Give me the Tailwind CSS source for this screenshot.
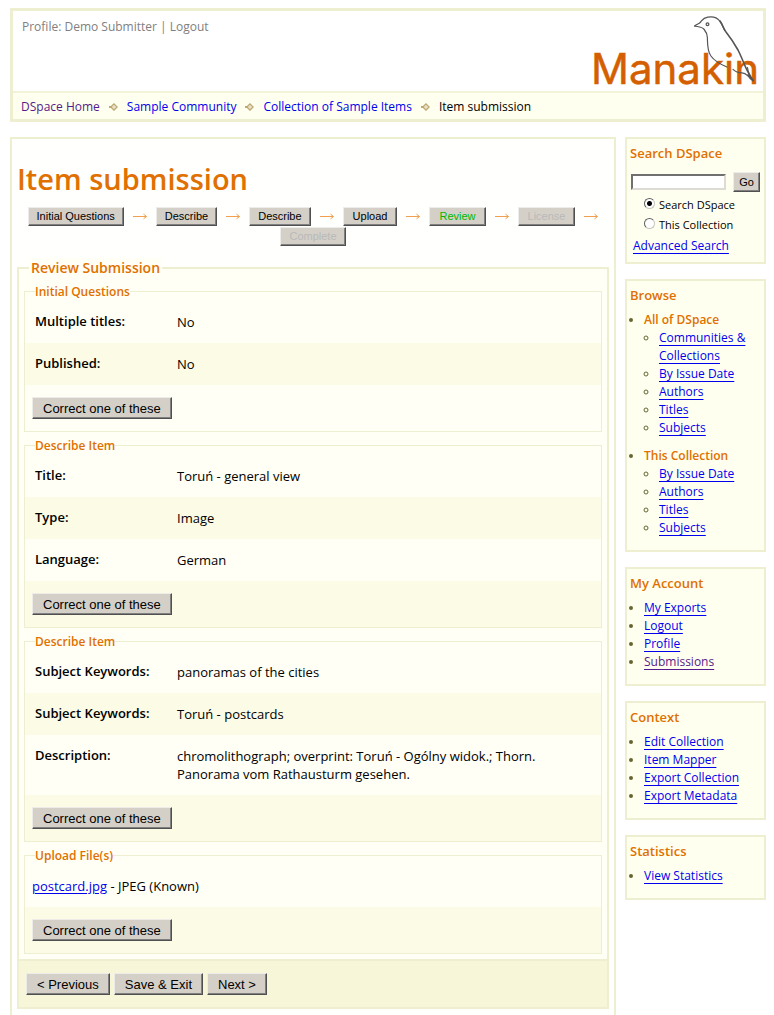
<!DOCTYPE html>
<html lang="en">
<head>
  <meta charset="UTF-8" />
  <meta name="viewport" content="width=device-width, initial-scale=1.0" />
  <title>Item submission</title>
  <script src="https://cdn.jsdelivr.net/npm/@tailwindcss/browser@4"></script>
</head>
<body class="bg-white font-['Open_Sans',sans-serif] text-[12px] leading-[18px] text-black pt-2 pl-[10px] pr-2">
  <svg class="hidden">
    <symbol id="crumb" viewBox="0 0 9 8">
      <path d="M0 4h3" stroke="#bda973" stroke-width="2" />
      <path d="M5 .8L8.2 4L5 7.2L2.5 4.7V3.3z" fill="#eadfc4" stroke="#bda973" stroke-width="1.2" />
    </symbol>
    <symbol id="arrow" viewBox="0 0 14 7">
      <path d="M0 3.5h13.5M10.5 1.2l3 2.3l-3 2.3" fill="none" stroke="#f0a050" stroke-width="1" />
    </symbol>
  </svg>

  <header class="border-3 border-[#eeefd0]">
    <div class="flex justify-between h-20 pl-[9px]">
      <p class="pt-[7px] text-[#808080]"><a href="#">Profile: Demo Submitter</a> | <a href="#">Logout</a></p>
      <svg class="w-[175px] h-20 overflow-visible" viewBox="0 0 175 80" role="img" aria-label="Manakin">
        <text x="3" y="73" font-family="Inter, sans-serif" font-size="42" fill="#d45f00" stroke="#d45f00" stroke-width=".5">Manakin</text>
        <g fill="none" stroke="#555" stroke-width="1.2" stroke-linecap="round">
          <path d="M106.700 15c2-2 4-2 5.500-3.500c2-2 2.500-4.500 7.500-5.300c4-.7 9-.2 12 3.800c2.500 3 3 6 5 9.500" />
          <path d="M132 10c3 4 3 7 6 11c4 5 8 11 12 18c3 6 5 11 7.500 17c2 5 5 9 7.500 13.700" stroke-width="1.600" />
          <path d="M106.700 15c3 .8 7 .4 9.500 3.500c2.500 3 3 4 3.200 8c.2 6-.4 13 3.500 18.500c4 5.500 10 8.500 16 11" />
          <path d="M145 58.300c3 3 6 3.500 9 3.500c5 0 4 2.500 11 7.900c-3-4-5-9-5.500-13M165 69.700c-2-1-4-3-5-6" />
          <circle cx="119.500" cy="13.300" r="1.400" />
        </g>
      </svg>
    </div>
    <nav class="flex items-center gap-[9px] h-7 border-t-2 border-[#f3f3d9] bg-[#ffffef] pl-2 pt-px text-[#0000ee]">
      <a href="#" class="text-[#551a8b]">DSpace Home</a>
      <svg class="w-[9px] h-2"><use href="#crumb" /></svg>
      <a href="#">Sample Community</a>
      <svg class="w-[9px] h-2"><use href="#crumb" /></svg>
      <a href="#">Collection of Sample Items</a>
      <svg class="w-[9px] h-2"><use href="#crumb" /></svg>
      <span class="text-black">Item submission</span>
    </nav>
  </header>

  <div class="flex items-start gap-[9px] mt-[15px]">
    <main class="flex-1 border-2 border-b-0 border-[#eeefd0] bg-[#fffffe] px-[5px] pt-5 pb-[6px]">
      <h1 class="text-[29px] leading-10 font-semibold text-[#e07000]">Item submission</h1>

      <ol class="flex flex-wrap justify-center gap-x-[9px] gap-y-px mt-2 font-['Liberation_Sans',sans-serif] text-[11px]">
        <li class="flex items-center gap-[9px]">
          <button class="h-[19px] px-2 leading-none border border-t-[#eeece8] border-l-[#eeece8] border-r-[#505050] border-b-[#505050] bg-[#d4d0c8] shadow-[inset_-1px_-1px_0_#808080]">Initial Questions</button>
          <svg class="w-[14px] h-[7px]"><use href="#arrow" /></svg>
        </li>
        <li class="flex items-center gap-[9px]">
          <button class="h-[19px] px-2 leading-none border border-t-[#eeece8] border-l-[#eeece8] border-r-[#505050] border-b-[#505050] bg-[#d4d0c8] shadow-[inset_-1px_-1px_0_#808080]">Describe</button>
          <svg class="w-[14px] h-[7px]"><use href="#arrow" /></svg>
        </li>
        <li class="flex items-center gap-[9px]">
          <button class="h-[19px] px-2 leading-none border border-t-[#eeece8] border-l-[#eeece8] border-r-[#505050] border-b-[#505050] bg-[#d4d0c8] shadow-[inset_-1px_-1px_0_#808080]">Describe</button>
          <svg class="w-[14px] h-[7px]"><use href="#arrow" /></svg>
        </li>
        <li class="flex items-center gap-[9px]">
          <button class="h-[19px] px-[9px] leading-none border border-t-[#eeece8] border-l-[#eeece8] border-r-[#505050] border-b-[#505050] bg-[#d4d0c8] shadow-[inset_-1px_-1px_0_#808080]">Upload</button>
          <svg class="w-[14px] h-[7px]"><use href="#arrow" /></svg>
        </li>
        <li class="flex items-center gap-[9px]">
          <button class="h-[19px] px-[9px] leading-none text-[#00b800] border border-t-[#eeece8] border-l-[#eeece8] border-r-[#505050] border-b-[#505050] bg-[#d4d0c8] shadow-[inset_-1px_-1px_0_#808080]">Review</button>
          <svg class="w-[14px] h-[7px]"><use href="#arrow" /></svg>
        </li>
        <li class="flex items-center gap-[9px]">
          <button disabled class="h-[19px] px-[9px] leading-none text-[#b9b9b9] border border-t-[#eeece8] border-l-[#eeece8] border-r-[#505050] border-b-[#505050] bg-[#d4d0c8] shadow-[inset_-1px_-1px_0_#808080]">License</button>
          <svg class="w-[14px] h-[7px]"><use href="#arrow" /></svg>
        </li>
        <li>
          <button disabled class="block h-[19px] px-2 leading-none text-[#b9b9b9] border border-t-[#eeece8] border-l-[#eeece8] border-r-[#505050] border-b-[#505050] bg-[#d4d0c8] shadow-[inset_-1px_-1px_0_#808080]">Complete</button>
        </li>
      </ol>

      <form class="mt-3 text-[13px]">
        <fieldset class="border-2 border-[#eeefd0] bg-[#fffff6]">
          <legend class="ml-[10px] px-[2px] bg-[#fffff6] text-[14px] leading-5 font-semibold text-[#e07000]">Review Submission</legend>

          <div class="flex flex-col gap-1 px-[5px] pt-1 pb-[5px]">
            <fieldset class="border border-[#eeefd0]">
              <legend class="ml-[10px] text-[12px] leading-[19px] font-semibold text-[#e07000]">Initial Questions</legend>
              <dl>
                <div class="flex px-[10px] py-3">
                  <dt class="w-[142px] -mt-px font-semibold">Multiple titles:</dt>
                  <dd class="flex-1">No</dd>
                </div>
                <div class="flex px-[10px] py-3 bg-[#fbfbe6]">
                  <dt class="w-[142px] -mt-px font-semibold">Published:</dt>
                  <dd class="flex-1">No</dd>
                </div>
              </dl>
              <div class="px-[7px] py-3">
                <button type="button" class="block h-[22px] px-[10px] font-['Liberation_Sans',sans-serif] leading-none border border-t-[#eeece8] border-l-[#eeece8] border-r-[#505050] border-b-[#505050] bg-[#d4d0c8] shadow-[inset_-1px_-1px_0_#808080]">Correct one of these</button>
              </div>
            </fieldset>

            <fieldset class="border border-[#eeefd0]">
              <legend class="ml-[10px] text-[12px] leading-[19px] font-semibold text-[#e07000]">Describe Item</legend>
              <dl>
                <div class="flex px-[10px] py-3">
                  <dt class="w-[142px] -mt-px font-semibold">Title:</dt>
                  <dd class="flex-1">Toruń - general view</dd>
                </div>
                <div class="flex px-[10px] py-3 bg-[#fbfbe6]">
                  <dt class="w-[142px] -mt-px font-semibold">Type:</dt>
                  <dd class="flex-1">Image</dd>
                </div>
                <div class="flex px-[10px] py-3">
                  <dt class="w-[142px] -mt-px font-semibold">Language:</dt>
                  <dd class="flex-1">German</dd>
                </div>
              </dl>
              <div class="px-[7px] py-3 bg-[#fbfbe6]">
                <button type="button" class="block h-[22px] px-[10px] font-['Liberation_Sans',sans-serif] leading-none border border-t-[#eeece8] border-l-[#eeece8] border-r-[#505050] border-b-[#505050] bg-[#d4d0c8] shadow-[inset_-1px_-1px_0_#808080]">Correct one of these</button>
              </div>
            </fieldset>

            <fieldset class="border border-[#eeefd0]">
              <legend class="ml-[10px] text-[12px] leading-[19px] font-semibold text-[#e07000]">Describe Item</legend>
              <dl>
                <div class="flex px-[10px] py-3">
                  <dt class="w-[142px] -mt-px font-semibold">Subject Keywords:</dt>
                  <dd class="flex-1">panoramas of the cities</dd>
                </div>
                <div class="flex px-[10px] py-3 bg-[#fbfbe6]">
                  <dt class="w-[142px] -mt-px font-semibold">Subject Keywords:</dt>
                  <dd class="flex-1">Toruń - postcards</dd>
                </div>
                <div class="flex px-[10px] py-3">
                  <dt class="w-[142px] -mt-px font-semibold">Description:</dt>
                  <dd class="flex-1">chromolithograph; overprint: Toruń - Ogólny widok.; Thorn.<br>Panorama vom Rathausturm gesehen.</dd>
                </div>
              </dl>
              <div class="px-[7px] py-3 bg-[#fbfbe6]">
                <button type="button" class="block h-[22px] px-[10px] font-['Liberation_Sans',sans-serif] leading-none border border-t-[#eeece8] border-l-[#eeece8] border-r-[#505050] border-b-[#505050] bg-[#d4d0c8] shadow-[inset_-1px_-1px_0_#808080]">Correct one of these</button>
              </div>
            </fieldset>

            <fieldset class="border border-[#eeefd0]">
              <legend class="ml-[10px] text-[12px] leading-[19px] font-semibold text-[#e07000]">Upload File(s)</legend>
              <p class="px-[7px] py-3"><a href="#" class="text-[#0000ee] underline underline-offset-2">postcard.jpg</a> - JPEG (Known)</p>
              <div class="px-[7px] py-3 bg-[#fbfbe6]">
                <button type="button" class="block h-[22px] px-[10px] font-['Liberation_Sans',sans-serif] leading-none border border-t-[#eeece8] border-l-[#eeece8] border-r-[#505050] border-b-[#505050] bg-[#d4d0c8] shadow-[inset_-1px_-1px_0_#808080]">Correct one of these</button>
              </div>
            </fieldset>
          </div>

          <div class="flex gap-1 border-t-2 border-[#eeefd0] bg-[#f7f6d9] px-[7px] py-3 font-['Liberation_Sans',sans-serif]">
            <button type="button" class="h-[22px] px-[10px] leading-none border border-t-[#eeece8] border-l-[#eeece8] border-r-[#505050] border-b-[#505050] bg-[#d4d0c8] shadow-[inset_-1px_-1px_0_#808080]">&lt; Previous</button>
            <button type="button" class="h-[22px] px-[10px] leading-none border border-t-[#eeece8] border-l-[#eeece8] border-r-[#505050] border-b-[#505050] bg-[#d4d0c8] shadow-[inset_-1px_-1px_0_#808080]">Save &amp; Exit</button>
            <button type="button" class="h-[22px] px-[10px] leading-none border border-t-[#eeece8] border-l-[#eeece8] border-r-[#505050] border-b-[#505050] bg-[#d4d0c8] shadow-[inset_-1px_-1px_0_#808080]">Next &gt;</button>
          </div>
        </fieldset>
      </form>
    </main>

    <aside class="flex flex-col gap-[15px] w-[141px]">
      <section class="border-2 border-[#eeefd0] bg-[#ffffef] px-[3px] pt-[5px] pb-[7px]">
        <h2 class="text-[13px] leading-[18px] font-semibold text-[#e07000]">Search DSpace</h2>
        <form class="mt-[10px]">
          <div class="flex items-center gap-[7px] h-5 px-px">
            <input type="text" aria-label="Search" class="flex-1 min-w-0 h-4 px-1 bg-white border-2 border-t-[#707070] border-l-[#707070] border-r-[#dedbd5] border-b-[#dedbd5]">
            <button type="button" class="h-5 px-[5px] font-['Liberation_Sans',sans-serif] text-[11px] leading-none border border-t-[#eeece8] border-l-[#eeece8] border-r-[#505050] border-b-[#505050] bg-[#d4d0c8] shadow-[inset_-1px_-1px_0_#808080]">Go</button>
          </div>
          <div class="mt-[3px] pl-[14px] text-[11px] leading-5">
            <label class="flex items-center gap-1"><input type="radio" name="scope" checked class="appearance-none size-[11px] mb-1 rounded-full border border-t-[#606060] border-l-[#606060] border-r-[#c8c5be] border-b-[#c8c5be] bg-white checked:bg-[radial-gradient(circle,#000_2px,#fff_3px)]">Search DSpace</label>
            <label class="flex items-center gap-1"><input type="radio" name="scope" class="appearance-none size-[11px] mb-1 rounded-full border border-t-[#606060] border-l-[#606060] border-r-[#c8c5be] border-b-[#c8c5be] bg-white checked:bg-[radial-gradient(circle,#000_2px,#fff_3px)]">This Collection</label>
          </div>
        </form>
        <a href="#" class="block mt-[2px] pl-[3px] text-[#0000ee] underline underline-offset-3">Advanced Search</a>
      </section>

      <section class="border-2 border-[#eeefd0] bg-[#ffffef] px-[3px] pt-[5px] pb-[13px]">
        <h2 class="text-[13px] leading-[18px] font-semibold text-[#e07000]">Browse</h2>
        <ul class="flex flex-col gap-[10px] mt-[7px] pl-[14px] list-disc marker:text-[#666633] text-[#0000ee]">
          <li>
            <h3 class="font-semibold text-[#e07000]">All of DSpace</h3>
            <ul class="pl-[15px] list-[circle] [&_a]:underline underline-offset-3">
              <li><a href="#">Communities &amp; Collections</a></li>
              <li><a href="#">By Issue Date</a></li>
              <li><a href="#">Authors</a></li>
              <li><a href="#">Titles</a></li>
              <li><a href="#">Subjects</a></li>
            </ul>
          </li>
          <li>
            <h3 class="font-semibold text-[#e07000]">This Collection</h3>
            <ul class="pl-[15px] list-[circle] [&_a]:underline underline-offset-3">
              <li><a href="#">By Issue Date</a></li>
              <li><a href="#">Authors</a></li>
              <li><a href="#">Titles</a></li>
              <li><a href="#">Subjects</a></li>
            </ul>
          </li>
        </ul>
      </section>

      <section class="border-2 border-[#eeefd0] bg-[#ffffef] px-[3px] pt-[5px] pb-[13px]">
        <h2 class="text-[13px] leading-[18px] font-semibold text-[#e07000]">My Account</h2>
        <ul class="mt-[7px] pl-[14px] list-disc marker:text-[#666633] text-[#0000ee] [&_a]:underline underline-offset-3">
          <li><a href="#">My Exports</a></li>
          <li><a href="#">Logout</a></li>
          <li><a href="#">Profile</a></li>
          <li><a href="#" class="text-[#551a8b]">Submissions</a></li>
        </ul>
      </section>

      <section class="border-2 border-[#eeefd0] bg-[#ffffef] px-[3px] pt-[5px] pb-[13px]">
        <h2 class="text-[13px] leading-[18px] font-semibold text-[#e07000]">Context</h2>
        <ul class="mt-[7px] pl-[14px] list-disc marker:text-[#666633] text-[#0000ee] [&_a]:underline underline-offset-3">
          <li><a href="#">Edit Collection</a></li>
          <li><a href="#">Item Mapper</a></li>
          <li><a href="#">Export Collection</a></li>
          <li><a href="#">Export Metadata</a></li>
        </ul>
      </section>

      <section class="border-2 border-[#eeefd0] bg-[#ffffef] px-[3px] pt-[5px] pb-[13px]">
        <h2 class="text-[13px] leading-[18px] font-semibold text-[#e07000]">Statistics</h2>
        <ul class="mt-[7px] pl-[14px] list-disc marker:text-[#666633] text-[#0000ee] [&_a]:underline underline-offset-3">
          <li><a href="#">View Statistics</a></li>
        </ul>
      </section>
    </aside>
  </div>
</body>
</html>
